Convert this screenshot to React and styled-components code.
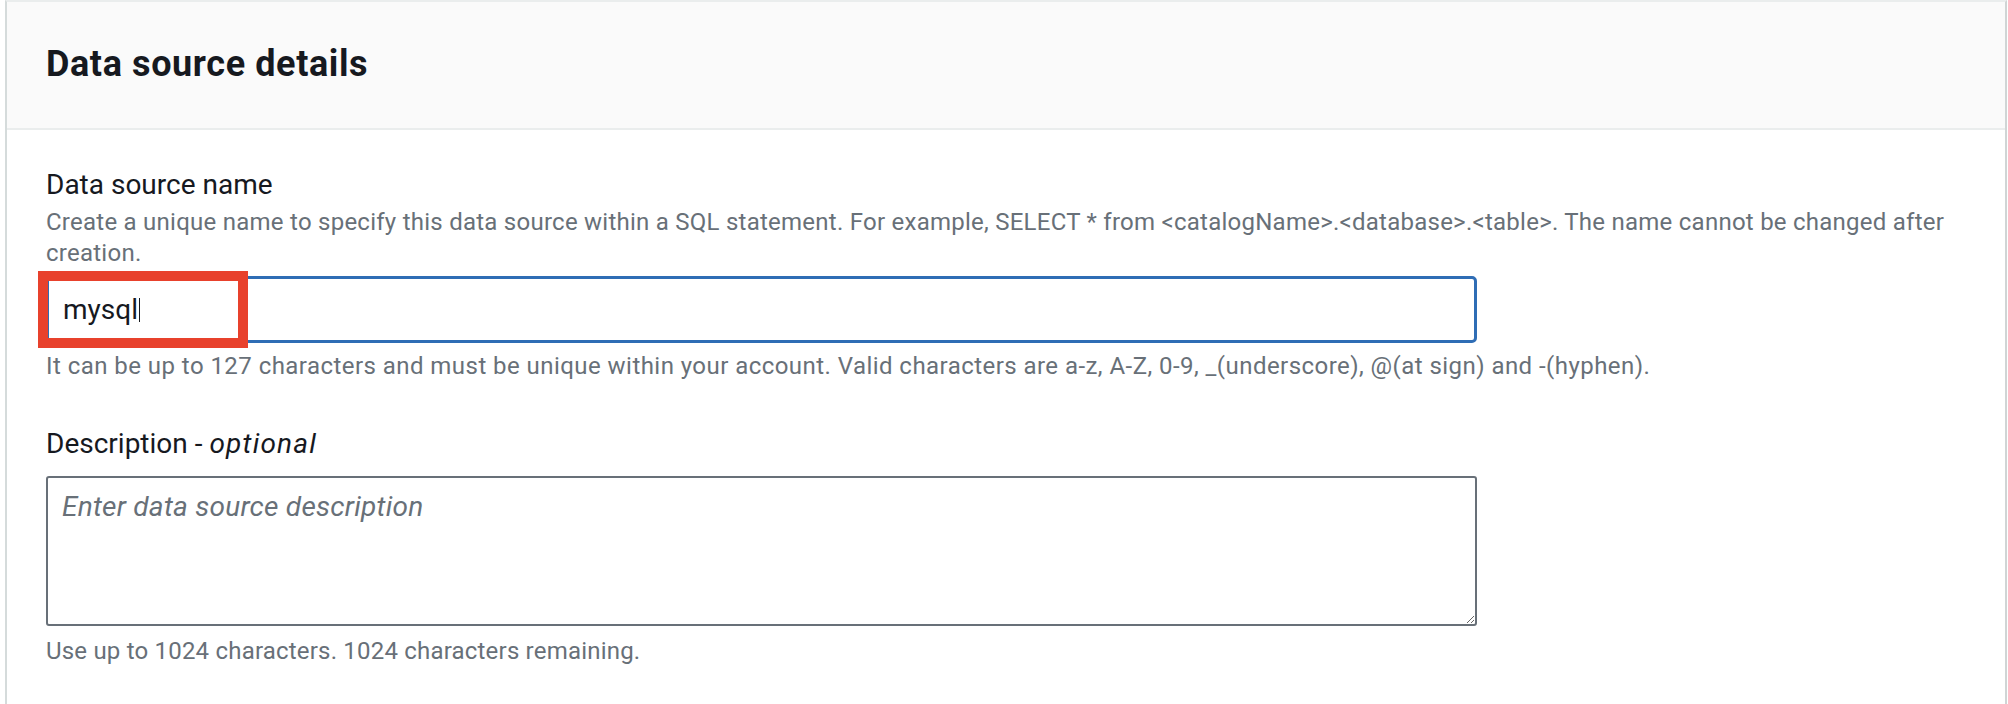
import styled, { createGlobalStyle } from "styled-components";

const GlobalStyle = createGlobalStyle`
  html, body {
    margin: 0;
    padding: 0;
    background: #ffffff;
  }
  body {
    font-family: Roboto, "Liberation Sans", Arial, sans-serif;
    color: #16191f;
  }
  * {
    box-sizing: border-box;
  }
`;

const Page = styled.div`
  width: 2008px;
  height: 704px;
  padding: 0 1px 0 5px;
  overflow: hidden;
`;

const Card = styled.section`
  height: 100%;
  background: #ffffff;
  border-top: 2px solid #eaeded;
  border-left: 2px solid #d5dbdb;
  border-right: 2px solid #d0d5d5;
`;

const Header = styled.div`
  background: #fafafa;
  border-bottom: 2px solid #eaeded;
  padding: 40px 39px 42px;
`;

const Title = styled.h2`
  margin: 0;
  font-size: 36px;
  line-height: 44px;
  font-weight: 700;
  letter-spacing: 0.6px;
  color: #16191f;
`;

const Body = styled.div`
  padding: 35px 39px 0;
`;

const Field = styled.div`
  display: flex;
  flex-direction: column;
  margin-top: ${(props) => props.gap || 0}px;
`;

const Label = styled.label`
  font-size: 28px;
  line-height: 40px;
  color: #16191f;

  em {
    font-style: italic;
    letter-spacing: 1.2px;
  }
`;

const Hint = styled.div`
  font-size: 24px;
  line-height: 31px;
  letter-spacing: ${(props) => props.spacing || 0.2}px;
  color: #687078;
  margin-top: ${(props) => props.top || 0}px;
`;

const InputWrap = styled.div`
  position: relative;
  width: 1431px;
  margin-top: 7px;
`;

const InputBox = styled.div`
  display: flex;
  align-items: center;
  height: 67px;
  padding: 0 14px;
  border: 3px solid #2f6db5;
  border-radius: 5px;
  font-size: 28px;
  color: #16191f;
`;

const Caret = styled.span`
  display: inline-block;
  width: 1.5px;
  height: 24px;
  margin-left: 1px;
  background: #16191f;
`;

const Highlight = styled.div`
  position: absolute;
  left: -8px;
  top: -5px;
  width: 210px;
  height: 77px;
  border: 10px solid #e8412c;
  pointer-events: none;
`;

const TextArea = styled.textarea`
  display: block;
  width: 1431px;
  height: 150px;
  margin-top: 12px;
  padding: 9px 14px;
  border: 2px solid #687078;
  border-radius: 3px;
  font-family: Roboto, "Liberation Sans", Arial, sans-serif;
  font-size: 28px;
  line-height: 40px;
  color: #16191f;
  resize: vertical;
  outline: none;

  &::placeholder {
    color: #687078;
    font-style: italic;
    letter-spacing: 0.25px;
  }
`;

export default function App() {
  return (
    <>
      <GlobalStyle />
      <Page>
        <Card>
          <Header>
            <Title>Data source details</Title>
          </Header>
          <Body>
            <Field>
              <Label>Data source name</Label>
              <Hint top={2} spacing={0.25}>
                Create a unique name to specify this data source within a SQL
                statement. For example, SELECT * from
                &lt;catalogName&gt;.&lt;database&gt;.&lt;table&gt;. The name
                cannot be changed after creation.
              </Hint>
              <InputWrap>
                <InputBox role="textbox">
                  mysql
                  <Caret />
                </InputBox>
                <Highlight />
              </InputWrap>
              <Hint top={8} spacing={0.45}>
                It can be up to 127 characters and must be unique within your
                account. Valid characters are a-z, A-Z, 0-9, _(underscore), @(at
                sign) and -(hyphen).
              </Hint>
            </Field>
            <Field gap={42}>
              <Label>
                Description - <em>optional</em>
              </Label>
              <TextArea placeholder="Enter data source description" />
              <Hint top={10}>
                Use up to 1024 characters. 1024 characters remaining.
              </Hint>
            </Field>
          </Body>
        </Card>
      </Page>
    </>
  );
}
